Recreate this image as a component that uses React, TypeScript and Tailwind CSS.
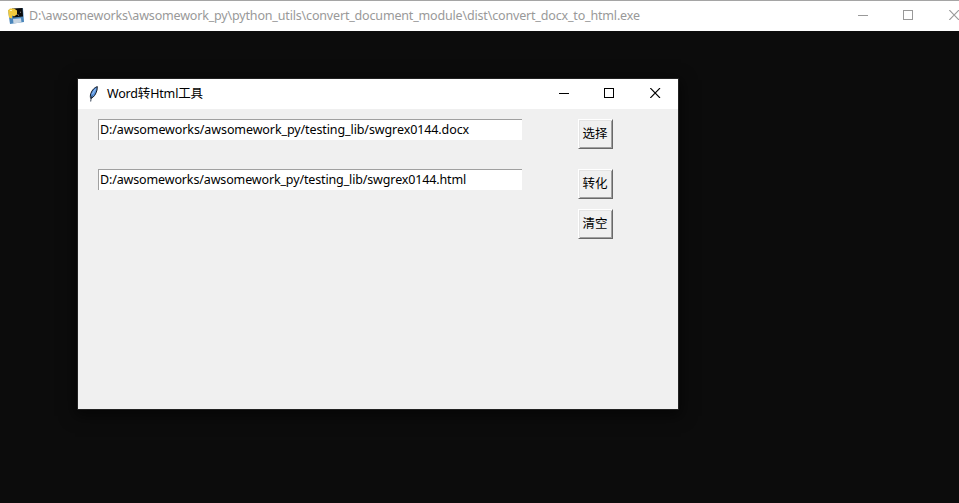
import type { ReactNode } from "react";

const latin = "font-['Noto_Sans','Noto_Sans_CJK_SC',sans-serif]";

function WindowControls() {
  return (
    <div className="mb-[2px] ml-auto flex shrink-0 items-center">
      <svg width="10" height="10" viewBox="0 0 10 10" shapeRendering="crispEdges">
        <path d="M0 5.5H10" stroke="currentColor" />
      </svg>
      <svg className="ml-[35px]" width="10" height="10" viewBox="0 0 10 10" shapeRendering="crispEdges">
        <path d="M.5 .5H9.5V9.5H.5Z" fill="none" stroke="currentColor" />
      </svg>
      <svg className="ml-9" width="11" height="10" viewBox="0 0 11 10">
        <path d="M.3 0L10 10M10 0L.3 10" stroke="currentColor" strokeWidth="1.1" />
      </svg>
    </div>
  );
}

function PythonDiskIcon() {
  return (
    <svg width="16" height="17" viewBox="0 0 16 17">
      <path d="M0 2L15 0L16 14L2 16Z" fill="#4a86bb" />
      <path d="M4 .5L14.5 0L15 8.5L5 9.5Z" fill="#0b0b0b" />
      <path d="M0 2.5L2 .5H6L9 2.5V6.5L6 8.5L4 7.5V10.5L1 9.5Z" fill="#f2ca3c" />
      <path d="M2 2.5H4" stroke="#fff6b0" />
      <path d="M9.5 6.5L11 7.5M12 4L13 4.5" stroke="#8b8b8b" />
      <path d="M5 11L13 10.3L13.5 14.5L5.5 15.5Z" fill="#c9d6e2" />
    </svg>
  );
}

function FeatherIcon() {
  return (
    <svg width="11" height="16" viewBox="0 0 11 16">
      <path d="M9.3 .6C6.5 1.5 4 4 2.8 7.5C2.2 9.5 2.2 11.5 2.8 12.5C5.8 11.5 8 8 9 4Z" fill="#5b95df" stroke="#141a24" />
      <path d="M4.2 9.5C3.4 11.5 2.9 13 2.7 15.5" fill="none" stroke="#1c2a40" strokeWidth=".9" />
      <path d="M7.6 3L4.4 8" stroke="#a5cbf8" strokeWidth=".8" />
    </svg>
  );
}

function Entry({ children }: { children: ReactNode }) {
  return (
    <div className="flex h-[21px] w-[424px] items-center border-t border-l border-[#a0a0a0] bg-white pl-px text-[12.5px] leading-[20px] whitespace-nowrap">
      {children}
    </div>
  );
}

function Button({ children }: { children: ReactNode }) {
  return (
    <button className="flex h-[30px] w-[35px] items-center justify-center border border-t-white border-r-[#696969] border-b-[#696969] border-l-white bg-[#f0f0f0] pr-px text-[12.5px] leading-none shadow-[inset_1px_1px_0_#e3e3e3,inset_-1px_-1px_0_#a0a0a0]">
      <span className="whitespace-nowrap">{children}</span>
    </button>
  );
}

export default function App() {
  return (
    <div className={`h-[503px] w-[959px] overflow-hidden bg-[#0c0c0c] text-black ${latin}`}>
      <header className="-mr-px flex h-[31px] items-center border-t border-[#a5a5a5] bg-white pl-2 text-[#999]">
        <PythonDiskIcon />
        <span className="ml-[5px] text-[12.5px] leading-[20px] tracking-[-0.17px] whitespace-nowrap">
          D:\awsomeworks\awsomework_py\python_utils\convert_document_module\dist\convert_docx_to_html.exe
        </span>
        <WindowControls />
      </header>
      <main className="pt-12 pl-[78px]">
        <section className="h-[330px] w-[600px] bg-[#f0f0f0] shadow-[0_0_0_1px_#222,0_4px_14px_3px_#00000090]">
          <div className="flex h-[30px] items-center bg-white pr-[17px] pl-[10px]">
            <FeatherIcon />
            <span className="ml-2 text-[12.5px] leading-[20px] tracking-[-0.17px] whitespace-nowrap">Word转Html工具</span>
            <WindowControls />
          </div>
          <div className="flex gap-14 pt-[10px] pl-5">
            <div className="flex flex-col gap-[29px]">
              <Entry>
                <span className="tracking-[-0.1px]">D:/awsomeworks/awsomework_py/testing_lib/swgrex0144.docx</span>
              </Entry>
              <Entry>
                <span className="tracking-[-0.14px]">D:/awsomeworks/awsomework_py/testing_lib/swgrex0144.html</span>
              </Entry>
            </div>
            <div className="flex flex-col">
              <Button>选择</Button>
              <div className="mt-5 flex flex-col gap-[10px]">
                <Button>转化</Button>
                <Button>清空</Button>
              </div>
            </div>
          </div>
        </section>
      </main>
    </div>
  );
}
